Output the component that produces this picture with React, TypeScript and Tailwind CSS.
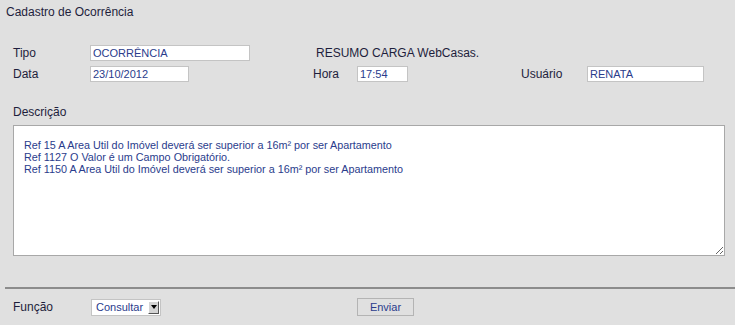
import React from 'react';

const labelCls = "text-[12px] text-[#1e1e3c]";
const inputCls =
  "h-[16px] bg-white border border-[#c4c4c4] px-[2px] text-[11px] leading-[14px] text-[#2a3c8c] outline-none";

export default function App() {
  return (
    <div
      className="w-[735px] h-[325px] bg-[#e0e0e0] overflow-hidden flex flex-col"
      style={{ fontFamily: '"Liberation Sans", Arial, sans-serif' }}
    >
      {/* Titulo */}
      <div className="pl-[6px] pt-[4px] text-[12px] leading-[16px] text-[#1e1e3c]">Cadastro de Ocorrência</div>

      {/* Cabecalho */}
      <div className="mt-[25px] pl-[13px] flex flex-col gap-[5px]">
        <div className="flex items-center h-[16px]">
          <span className={`${labelCls} w-[77px]`}>Tipo</span>
          <input className={`${inputCls} w-[160px]`} defaultValue="OCORRÊNCIA" readOnly />
          <span className={`${labelCls} ml-[66px]`}>RESUMO CARGA WebCasas.</span>
        </div>
        <div className="flex items-center h-[16px]">
          <span className={`${labelCls} w-[77px]`}>Data</span>
          <input className={`${inputCls} w-[99px]`} defaultValue="23/10/2012" readOnly />
          <span className={`${labelCls} ml-[124px] w-[44px]`}>Hora</span>
          <input className={`${inputCls} w-[51px]`} defaultValue="17:54" readOnly />
          <span className={`${labelCls} ml-[113px] w-[66px]`}>Usuário</span>
          <input className={`${inputCls} w-[117px]`} defaultValue="RENATA" readOnly />
        </div>
      </div>

      {/* Descricao */}
      <div className="pl-[13px] mt-[23px]">
        <div className={`${labelCls} leading-[14px]`}>Descrição</div>
        <textarea
          className="mt-[6px] block w-[712px] h-[131px] bg-white border border-[#a8a8a8] pl-[10px] pt-[13px] text-[10.8px] leading-[12px] text-[#2a3c8c] outline-none"
          defaultValue={
            "Ref 15 A Area Util do Imóvel deverá ser superior a 16m² por ser Apartamento\nRef 1127 O Valor é um Campo Obrigatório.\nRef 1150 A Area Util do Imóvel deverá ser superior a 16m² por ser Apartamento"
          }
          readOnly
        />
      </div>

      {/* Linha */}
      <div className="ml-[5px] mt-[31px] border-t-2 border-[#8c8c8c]" />

      {/* Rodape */}
      <div className="pl-[13px] mt-[9px] flex items-center h-[18px]">
        <span className={`${labelCls} w-[78px]`}>Função</span>
        <div className="w-[70px] h-[17px] bg-white border border-[#c4c4c4] flex items-center justify-between pl-[4px] pr-[1px]">
          <span className="text-[11px] text-[#2a3c8c]">Consultar</span>
          <span className="w-[11px] h-[13px] bg-[#d4d4d4] border-r border-b border-[#555] border-t border-l border-t-white border-l-white flex items-center justify-center">
            <span className="w-0 h-0 border-l-[3px] border-r-[3px] border-t-[4px] border-l-transparent border-r-transparent border-t-black" />
          </span>
        </div>
        <button className="ml-[196px] w-[57px] h-[18px] bg-[#e0e0e0] border border-[#b4b4b4] text-[11px] text-[#2a3c8c] leading-[16px]">
          Enviar
        </button>
      </div>
    </div>
  );
}
